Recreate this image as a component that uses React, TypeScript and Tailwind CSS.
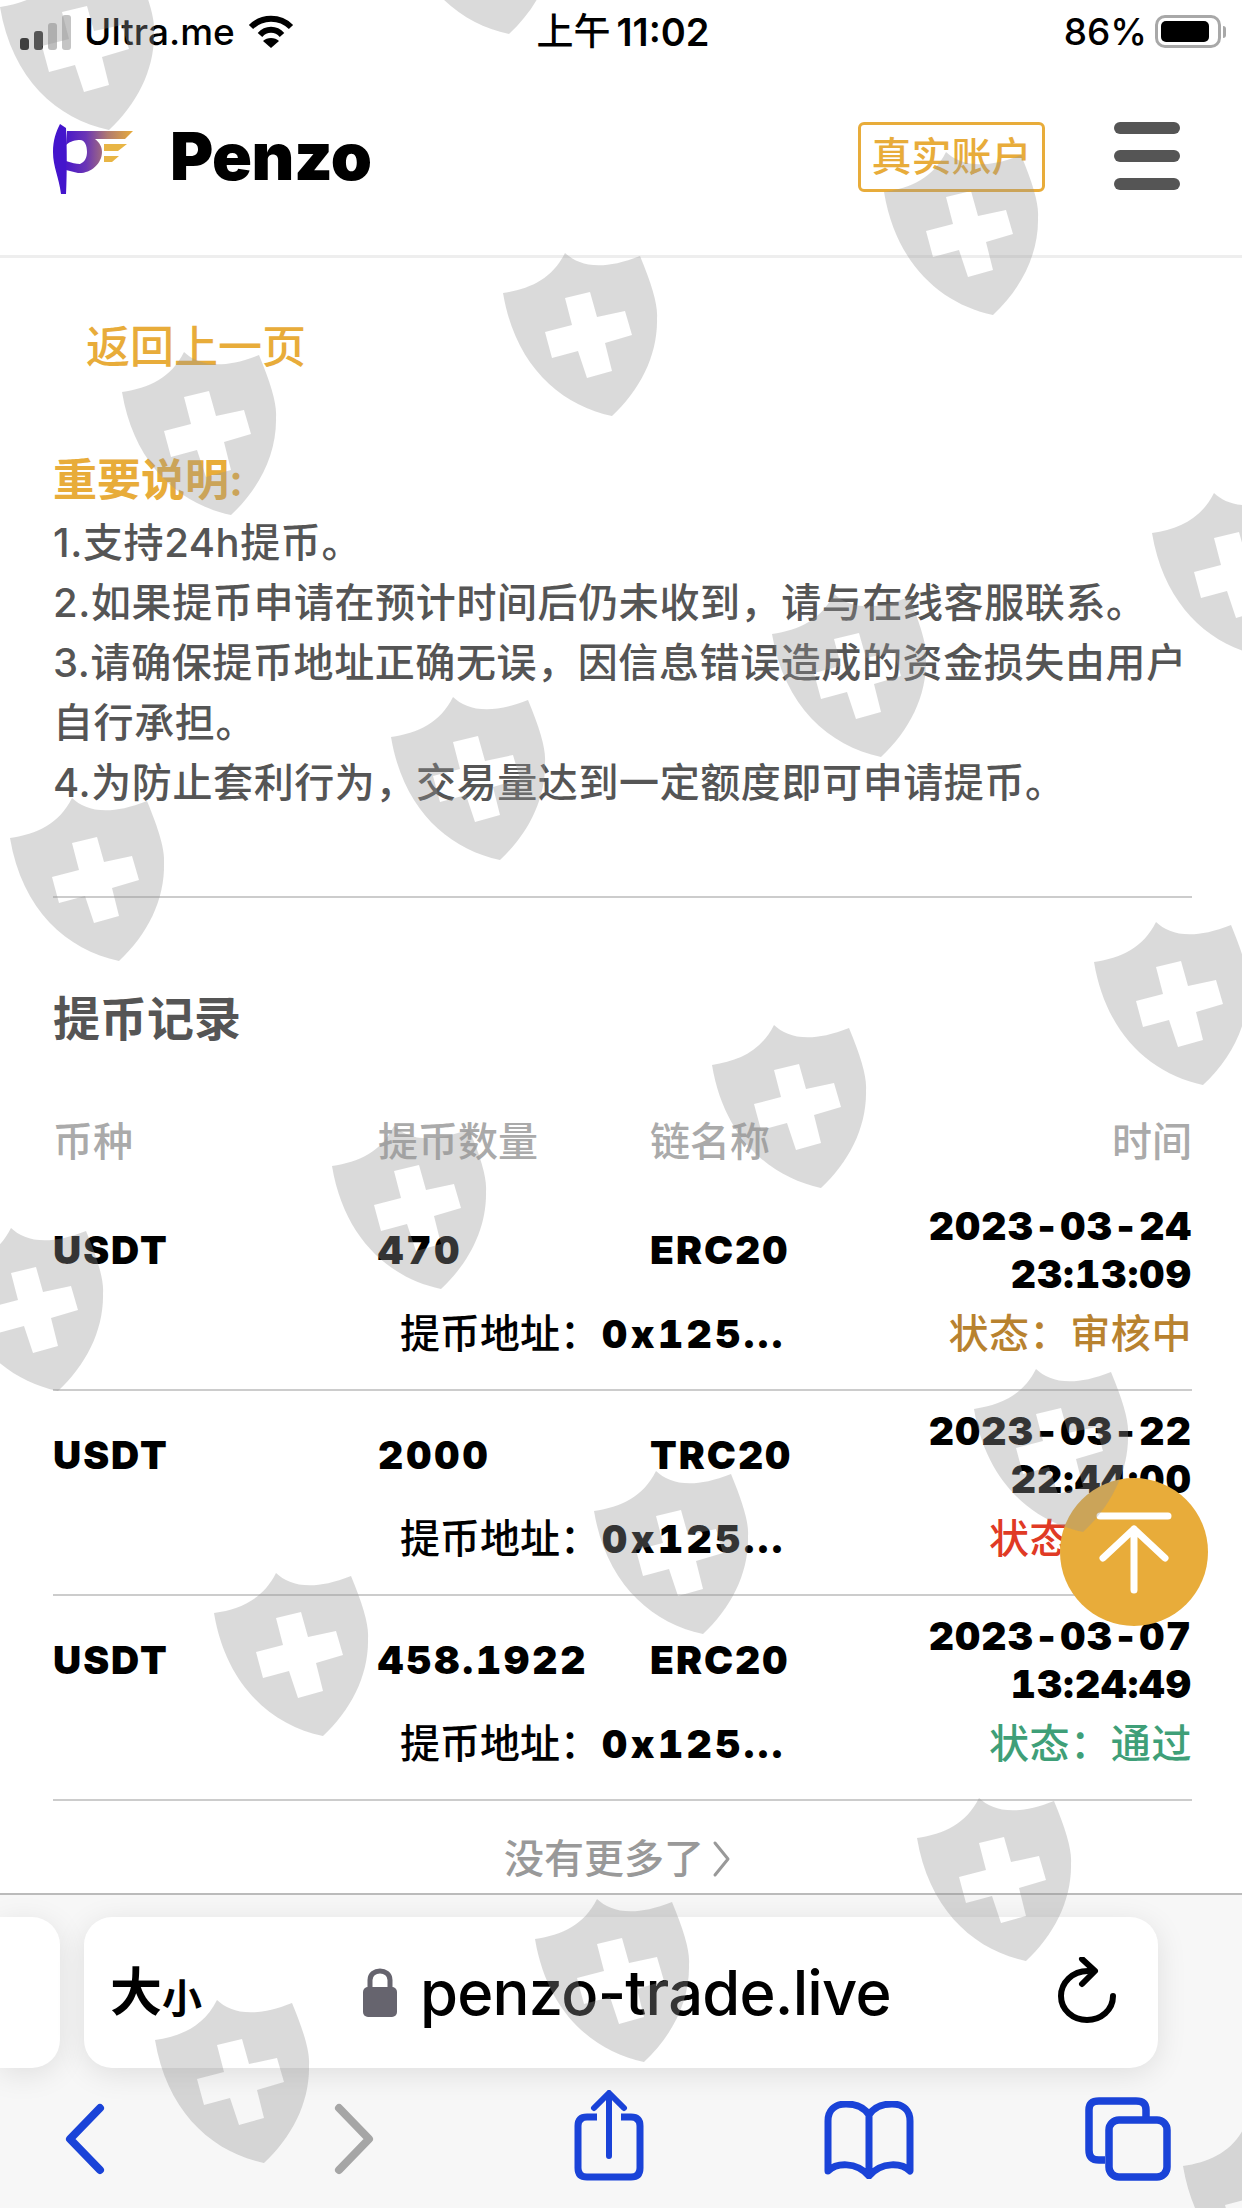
import React from "react";

const shields = [
  [-13, -41], [387, -137], [871, 144], [490, 245], [109, 344], [1139, 485],
  [759, 586], [378, 689], [-3, 790], [1081, 914], [699, 1017], [319, 1118],
  [-64, 1220], [961, 1361], [581, 1463], [201, 1565], [904, 1790], [522, 1891],
  [142, 1992], [1170, 2118],
];

const records = [
  { amount: "470", chain: "ERC20", date: "2023-03-24", time: "23:13:09", status: "状态\uFF1A审核中", color: "text-[#b8822f]" },
  { amount: "2000", chain: "TRC20", date: "2023-03-22", time: "22:44:00", status: "状态\uFF1A失败", color: "text-[#e03a25]" },
  { amount: "458.1922", chain: "ERC20", date: "2023-03-07", time: "13:24:49", status: "状态\uFF1A通过", color: "text-[#3f9f78]" },
];

const notes = [
  "1.支持24h提币。",
  "2.如果提币申请在预计时间后仍未收到\uFF0C请与在线客服联系。",
  "3.请确保提币地址正确无误\uFF0C因信息错误造成的资金损失由用户自行承担。",
  "4.为防止套利行为\uFF0C交易量达到一定额度即可申请提币。",
];

const Shield = ({ x, y }: { x: number; y: number }) => (
  <svg
    viewBox="0 0 180 180"
    width="180"
    height="180"
    className="absolute"
    style={{ left: x, top: y }}
  >
    <path
      fillRule="evenodd"
      fill="#969696"
      fillOpacity="0.35"
      d="M75 8C88 20 110 27 150 11C162 40 168 60 167 73C168 110 150 145 122 171C70 160 25 120 13 48C40 44 62 34 75 8ZM75 53L100 47L107 72L135 66L142 90L115 98L122 126L97 133L88 106L62 113L55 87L82 80Z"
    />
  </svg>
);

const Logo = () => (
  <svg viewBox="0 0 90 75" width="90" height="75" className="block">
    <defs>
      <linearGradient id="pz" x1="0" x2="1" y1="0" y2="0">
        <stop offset="0" stopColor="#4a18c9" />
        <stop offset="0.3" stopColor="#6a35b5" />
        <stop offset="0.62" stopColor="#b07a70" />
        <stop offset="1" stopColor="#e8ac3a" />
      </linearGradient>
    </defs>
    <path fill="#4415cc" d="M10 2L16 6C17 25 17 50 16 72L11 72C9 55 3 45 3 30C3 18 6 10 10 2Z" />
    <path
      fill="url(#pz)"
      d="M17 9L83 9L75 17L45 17C50 21 52 25 52 30C52 42 40 52 28 51L16 48L16 39C22 41 26 42 30 42C35 40 37 35 37 30C37 24 35 18 30 18C26 18 20 19 16 23Z"
    />
    <path fill="#e8b545" d="M54 22L77 22L68 29L54 29Z" />
    <path fill="#e8b545" d="M54 34L69 34L62 40L54 40Z" />
  </svg>
);

const StatusBar = () => (
  <div className="flex h-[62px] shrink-0 items-center justify-between pl-[20px] pr-[16px] pt-[1px] text-black">
    <div className="flex w-[320px] items-center">
      <svg viewBox="0 0 56 36" width="56" height="36" className="mr-[8px]">
        <rect x="0" y="24" width="9" height="12" rx="3" fill="#111" />
        <rect x="14" y="17" width="9" height="19" rx="3" fill="#333" />
        <rect x="28" y="9" width="9" height="27" rx="3" fill="#bdbdbd" />
        <rect x="42" y="1" width="9" height="35" rx="3" fill="#c4c4c4" />
      </svg>
      <span className="text-[37px] leading-none font-medium">Ultra.me</span>
      <svg viewBox="0 0 46 36" width="46" height="36" className="ml-[13px]">
        <path fill="none" stroke="#000" strokeWidth="6" d="M3 13C14 2 32 2 43 13" />
        <path fill="none" stroke="#000" strokeWidth="6" d="M12 21C18 14 28 14 34 21" />
        <path fill="#000" d="M23 34L15 27C19 23 27 23 31 27Z" />
      </svg>
    </div>
    <div className="flex items-center gap-[6px] leading-none">
      <span className="text-[37px] font-medium">上午</span>
      <span className="text-[38px] font-semibold">11:02</span>
    </div>
    <div className="flex w-[320px] items-center justify-end">
      <span className="text-[37px] leading-none font-medium">86%</span>
      <div className="ml-[8px] flex h-[33px] w-[66px] items-center rounded-[10px] border-[3px] border-[#a8a8a8] p-[3px]">
        <div className="h-full w-[48px] rounded-[5px] bg-black" />
      </div>
      <div className="ml-[2px] h-[12px] w-[3px] rounded-r-full bg-[#a8a8a8]" />
    </div>
  </div>
);

const Header = () => (
  <div className="flex h-[196px] shrink-0 items-start border-b-[3px] border-[#eeeeee] pt-[60px] pl-[50px] pr-[62px]">
    <Logo />
    <div className="ml-[30px] mt-[-3px] text-[66px] leading-[75px] font-black tracking-[-0.5px] text-black">Penzo</div>
    <div className="ml-auto flex h-[70px] w-[187px] items-center justify-center rounded-[6px] border-[3px] border-[#e8ac3a] text-[40px] leading-none font-medium text-[#e8ac3a]">
      真实账户
    </div>
    <div className="ml-[69px] flex w-[66px] flex-col gap-[16px]">
      <div className="h-[12px] rounded-full bg-[#555555]" />
      <div className="h-[12px] rounded-full bg-[#555555]" />
      <div className="h-[12px] rounded-full bg-[#555555]" />
    </div>
  </div>
);

const Notes = () => (
  <div>
    <div className="pl-[33px] text-[44px] leading-[60px] font-medium text-[#e8ac3a]">返回上一页</div>
    <div className="mt-[73px] text-[44px] leading-[60px] font-semibold text-[#e8ac3a]">重要说明:</div>
    <div className="mt-[3px] text-[40px] leading-[60px] font-medium tracking-[0.6px] text-[#555555]">
      {notes.map((n) => (
        <p key={n}>{n}</p>
      ))}
    </div>
  </div>
);

const Records = () => (
  <div>
    <div className="text-[47px] leading-[60px] font-semibold text-[#555555]">提币记录</div>
    <div className="mt-[70px] grid grid-cols-[325px_272px_1fr_auto] text-[40px] leading-[46px] font-medium text-[#aaaaaa]">
      <div>币种</div>
      <div>提币数量</div>
      <div>链名称</div>
      <div className="text-right">时间</div>
    </div>
    <div className="mt-[21px]">
      {records.map((r) => (
        <div key={r.date} className="h-[205px] border-b-2 border-[#cccccc] pt-[16px]">
          <div className="grid grid-cols-[325px_272px_1fr_auto] items-center text-[39px] font-black text-black tabular-nums">
            <div className="tracking-[2px]">USDT</div>
            <div className="tracking-[3px]">{r.amount}</div>
            <div className="tracking-[2px]">{r.chain}</div>
            <div className="text-right leading-[48px] tracking-[1.2px]">
              {r.date}
              <br />
              {r.time}
            </div>
          </div>
          <div className="mt-[12px] flex items-center pl-[347px] leading-[48px]">
            <span className="text-[40px] font-medium text-black">提币地址{"\uFF1A"}</span>
            <span className="ml-[2px] text-[39px] font-black tracking-[3.5px] text-black tabular-nums">0x125...</span>
            <span className={`ml-auto text-[40px] font-medium tracking-[0.6px] ${r.color}`}>{r.status}</span>
          </div>
        </div>
      ))}
    </div>
    <div className="mt-[34px] flex items-center justify-center pr-[9px] text-[40px] leading-[48px] font-medium text-[#999999]">
      没有更多了
      <svg viewBox="0 0 20 40" width="20" height="40" className="ml-[8px]">
        <path d="M3 4L16 20L3 36" fill="none" stroke="#999" strokeWidth="3" strokeLinecap="round" strokeLinejoin="round" />
      </svg>
    </div>
  </div>
);

const BrowserBar = () => (
  <div className="flex h-[315px] shrink-0 flex-col border-t-2 border-[#bbbbbb] bg-[#f7f7f7]">
    <div className="mt-[22px] flex h-[151px] shrink-0 gap-[24px]">
      <div className="w-[60px] shrink-0 rounded-r-[28px] bg-white shadow-[0_6px_30px_rgba(0,0,0,0.1)]" />
      <div className="flex w-[1074px] shrink-0 items-center rounded-[28px] bg-white pl-[26px] pr-[42px] shadow-[0_6px_30px_rgba(0,0,0,0.1)]">
        <div className="flex w-[252px] items-end font-semibold text-black">
          <span className="text-[52px] leading-none">大</span>
          <span className="text-[40px] leading-none">小</span>
        </div>
        <svg viewBox="0 0 36 50" width="36" height="50" className="mt-[-2px]">
          <rect x="1" y="20" width="34" height="30" rx="5" fill="#66646e" />
          <path d="M8 22V13C8 1 28 1 28 13V22" fill="none" stroke="#66646e" strokeWidth="5" />
        </svg>
        <span className="ml-[22px] text-[61.5px] leading-none font-medium tracking-[-0.8px] text-black">penzo-trade.live</span>
        <svg viewBox="0 0 58 66" width="58" height="66" className="ml-auto mt-[-6px]">
          <path d="M30 14C14 14 3 26 3 39C3 53 15 63 29 63C43 63 55 53 55 39" fill="none" stroke="#000" strokeWidth="6" strokeLinecap="round" />
          <path d="M24 2L37 14L24 27" fill="none" stroke="#000" strokeWidth="6" strokeLinecap="round" strokeLinejoin="round" />
        </svg>
      </div>
    </div>
    <div className="mt-[22px] flex items-start">
      <svg viewBox="0 0 44 74" width="44" height="74" className="ml-[62px] mt-[12px]">
        <path d="M38 6L8 37L38 68" fill="none" stroke="#1a43d8" strokeWidth="8" strokeLinecap="round" strokeLinejoin="round" />
      </svg>
      <svg viewBox="0 0 44 74" width="44" height="74" className="ml-[225px] mt-[12px]">
        <path d="M8 6L38 37L8 68" fill="none" stroke="#a6a6a6" strokeWidth="8" strokeLinecap="round" strokeLinejoin="round" />
      </svg>
      <svg viewBox="0 0 72 92" width="72" height="92" className="ml-[198px]">
        <path d="M24 27H14C8 27 5 30 5 36V78C5 84 8 87 14 87H58C64 87 67 84 67 78V36C67 30 64 27 58 27H48" fill="none" stroke="#1a43d8" strokeWidth="7" />
        <path d="M36 66V4M21 18L36 3L51 18" fill="none" stroke="#1a43d8" strokeWidth="6" strokeLinecap="round" strokeLinejoin="round" />
      </svg>
      <svg viewBox="0 0 90 78" width="90" height="78" className="ml-[179px] mt-[11px]">
        <path d="M45 14C40 6 32 3 22 3C10 3 4 10 4 20V70C12 62 32 60 45 75C58 60 78 62 86 70V20C86 10 80 3 68 3C58 3 50 6 45 14ZM45 14V73" fill="none" stroke="#1a43d8" strokeWidth="7" strokeLinecap="round" strokeLinejoin="round" />
      </svg>
      <svg viewBox="0 0 86 84" width="86" height="84" className="ml-[171px] mt-[7px]">
        <path d="M20 63H14C7 63 4 60 4 53V13C4 7 7 4 14 4H51C58 4 61 7 61 13V21" fill="none" stroke="#1a43d8" strokeWidth="7.5" />
        <rect x="24" y="23" width="58" height="57" rx="10" fill="none" stroke="#1a43d8" strokeWidth="7.5" />
      </svg>
    </div>
  </div>
);

export default function App() {
  return (
    <div className="relative flex h-[2208px] w-[1242px] flex-col overflow-hidden bg-white font-['Inter','Noto_Sans_CJK_SC',sans-serif]">
      <StatusBar />
      <Header />
      <div className="flex-1 overflow-hidden pl-[53px] pr-[50px] pt-[59px]">
        <Notes />
        <div className="mt-[83px] h-[2px] bg-[#cccccc]" />
        <div className="mt-[91px]">
          <Records />
        </div>
      </div>
      <BrowserBar />

      {/* back to top */}
      <div className="absolute left-[1060px] top-[1478px] flex h-[148px] w-[148px] items-center justify-center rounded-full bg-[#e8ac3a]">
        <svg viewBox="0 0 80 90" width="80" height="90">
          <path d="M6 9H74M40 22V83M9 51L40 22L71 51" fill="none" stroke="#fff" strokeWidth="7" strokeLinecap="round" strokeLinejoin="round" />
        </svg>
      </div>

      {/* watermark */}
      <div className="pointer-events-none absolute inset-0">
        {shields.map(([x, y]) => (
          <Shield key={`${x}-${y}`} x={x} y={y} />
        ))}
      </div>
    </div>
  );
}
